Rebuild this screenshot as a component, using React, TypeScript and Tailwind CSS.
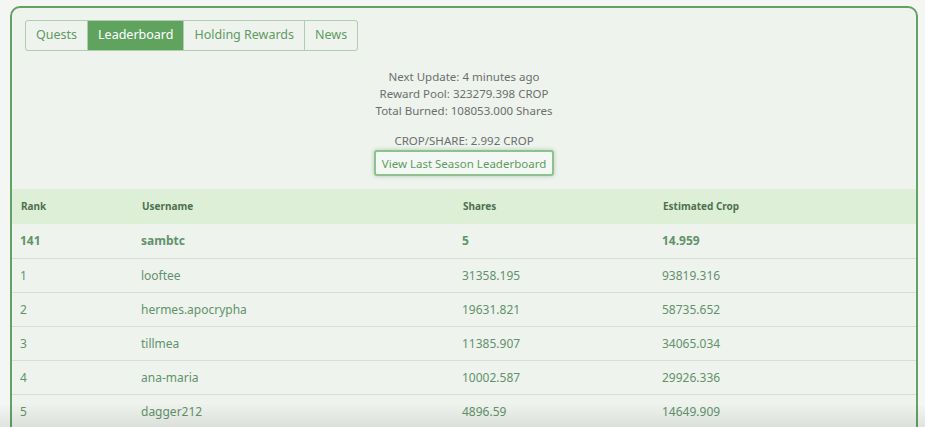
import React from "react";

const rows = [
  { rank: "141", user: "sambtc", shares: "5", est: "14.959", bold: true },
  { rank: "1", user: "looftee", shares: "31358.195", est: "93819.316" },
  { rank: "2", user: "hermes.apocrypha", shares: "19631.821", est: "58735.652" },
  { rank: "3", user: "tillmea", shares: "11385.907", est: "34065.034" },
  { rank: "4", user: "ana-maria", shares: "10002.587", est: "29926.336" },
  { rank: "5", user: "dagger212", shares: "4896.59", est: "14649.909" },
];

const tabs = ["Quests", "Leaderboard", "Holding Rewards", "News"];

export default function App() {
  return (
    <div
      className="relative h-[427px] overflow-hidden bg-[#f4f6f4] pt-[6px] pl-[10px] pr-[7px]"
      style={{ fontFamily: '"Noto Sans", "Open Sans", sans-serif' }}
    >
      <div className="h-[460px] rounded-[10px] border-2 border-[#63a263] bg-[#eef3ee]">
        <div className="pl-[13px] pt-[12px]">
          <div className="inline-flex h-[31px] overflow-hidden rounded-[3px] border border-[#b0cdb0] text-[12.5px] text-[#5f9a5f]">
            {tabs.map((t, i) => (
              <div
                key={t}
                className={
                  "flex items-center px-[10px] " +
                  (i > 0 ? "border-l border-[#b0cdb0] " : "") +
                  (t === "Leaderboard" ? "bg-[#5fa35f] text-white" : "")
                }
              >
                {t}
              </div>
            ))}
          </div>
        </div>
        <div className="mt-[17px] flex flex-col items-center text-[11.5px] leading-[17px] text-[#6b6f6b]">
          <div>Next Update: 4 minutes ago</div>
          <div>Reward Pool: 323279.398 CROP</div>
          <div>Total Burned: 108053.000 Shares</div>
          <div className="mt-[13px]">CROP/SHARE: 2.992 CROP</div>
          <div className="mt-[1px] flex h-[26px] items-center rounded-[3px] border-2 border-[#8fc08f] bg-[#f4f8f4] px-[6px] text-[11.5px] text-[#5f9a5f] shadow-[0_0_4px_rgba(95,160,95,0.45)]">
            View Last Season Leaderboard
          </div>
        </div>
        <div className="mt-[13px]">
          <div className="grid h-[35px] grid-cols-[121px_321px_200px_1fr] items-center bg-[#ddefd6] pl-[9px] text-[10px] font-bold text-[#4f6f4f]">
            <div>Rank</div>
            <div>Username</div>
            <div>Shares</div>
            <div>Estimated Crop</div>
          </div>
          {rows.map((r, i) => (
            <div
              key={r.rank}
              className={
                "grid h-[34px] grid-cols-[121px_321px_200px_1fr] items-center pl-[8px] text-[12px] text-[#62926a] " +
                (i > 0 ? "border-t border-[#d8ddd8] " : "") +
                (r.bold ? "font-bold" : "")
              }
            >
              <div>{r.rank}</div>
              <div>{r.user}</div>
              <div>{r.shares}</div>
              <div>{r.est}</div>
            </div>
          ))}
        </div>
      </div>
      <div className="pointer-events-none absolute bottom-0 left-0 right-0 h-[24px] bg-gradient-to-t from-[rgba(0,0,0,0.08)] to-transparent" />
    </div>
  );
}
